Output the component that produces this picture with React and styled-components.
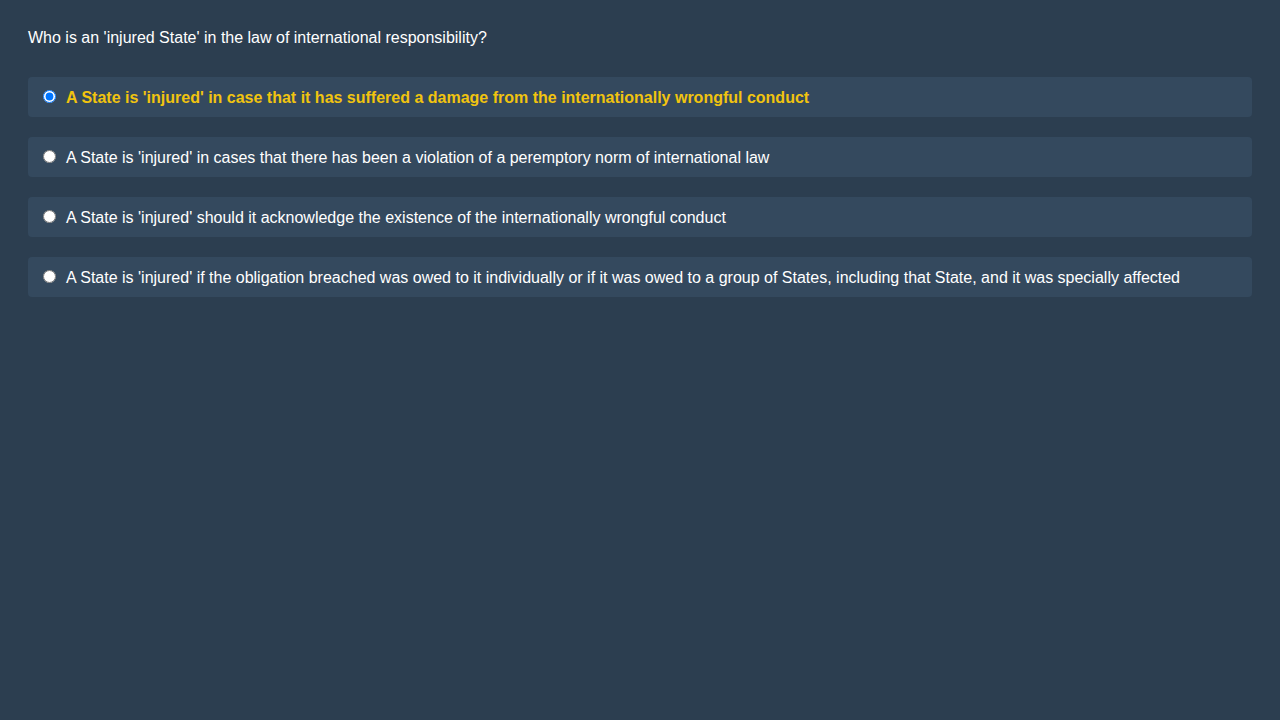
import React, { useState } from 'react'
import styled, { createGlobalStyle } from 'styled-components'

const GlobalStyle = createGlobalStyle`
  html, body {
    margin: 0;
    padding: 0;
    background: #2c3e50;
    min-height: 100%;
  }
  body {
    font-family: "Liberation Sans", Arial, sans-serif;
    color: #ffffff;
  }
`

const Page = styled.div`
  min-height: 720px;
  box-sizing: border-box;
  padding: 29px 28px 28px;
  background: #2c3e50;
`

const Question = styled.div`
  font-size: 16px;
  line-height: 18px;
  margin-bottom: 30px;
`

const Options = styled.div`
  display: flex;
  flex-direction: column;
  gap: 20px;
`

const Option = styled.label`
  display: flex;
  align-items: center;
  box-sizing: border-box;
  height: 40px;
  padding-top: 2px;
  background: #34495e;
  border-radius: 4px;
  cursor: pointer;
  font-size: 16px;
  font-weight: ${p => (p.$selected ? 'bold' : 'normal')};
  color: ${p => (p.$selected ? '#f1c40f' : '#ffffff')};
  input {
    width: 13px;
    height: 13px;
    margin: -4px 10px 0 15px;
    flex-shrink: 0;
  }
`

const answers = [
  "A State is 'injured' in case that it has suffered a damage from the internationally wrongful conduct",
  "A State is 'injured' in cases that there has been a violation of a peremptory norm of international law",
  "A State is 'injured' should it acknowledge the existence of the internationally wrongful conduct",
  "A State is 'injured' if the obligation breached was owed to it individually or if it was owed to a group of States, including that State, and it was specially affected",
]

const App = () => {
  const [selected, setSelected] = useState(0)

  return (
    <Page>
      <GlobalStyle />
      <Question>Who is an 'injured State' in the law of international responsibility?</Question>
      <Options>
        {answers.map((text, i) => (
          <Option key={i} $selected={selected === i}>
            <input
              type="radio"
              name="answer"
              checked={selected === i}
              onChange={() => setSelected(i)}
            />
            {text}
          </Option>
        ))}
      </Options>
    </Page>
  )
}

export default App
